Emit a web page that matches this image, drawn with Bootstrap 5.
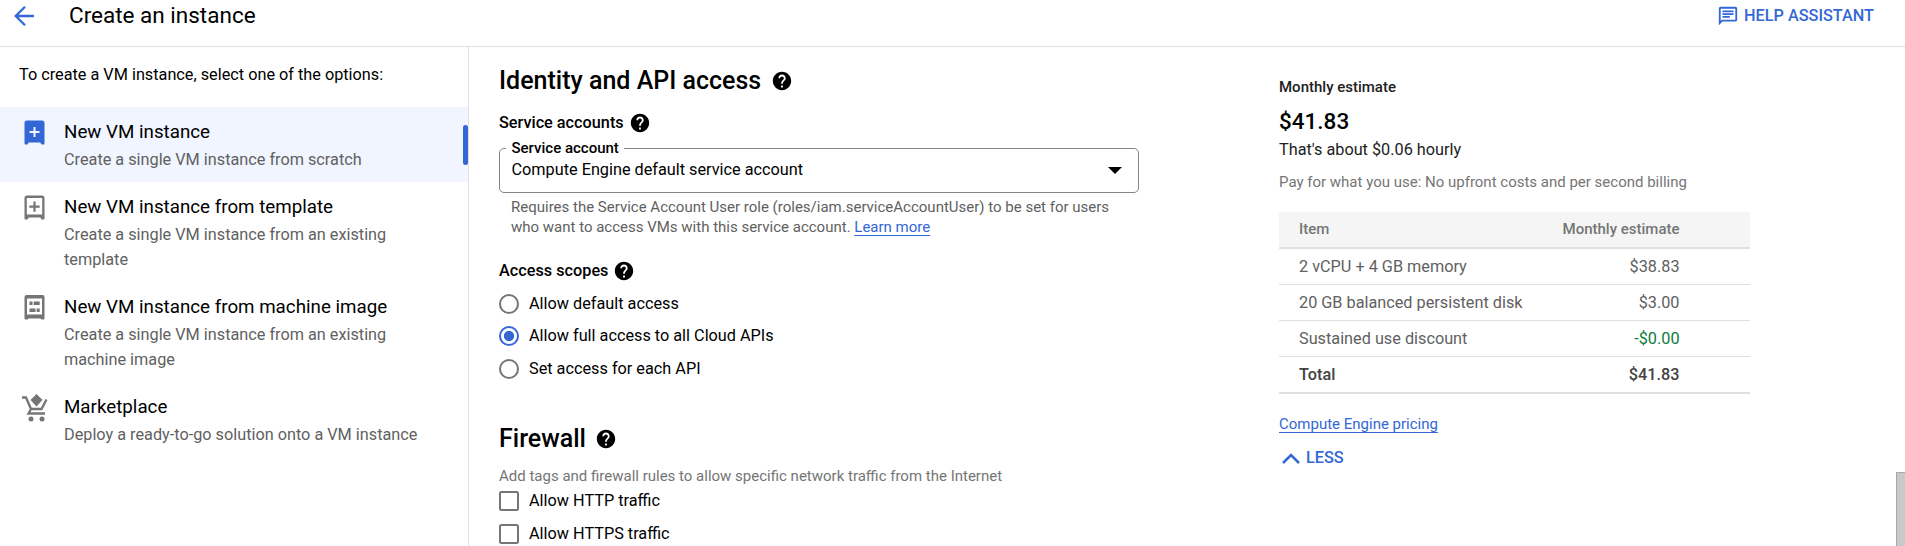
<!DOCTYPE html>
<html lang="en">
<head>
<meta charset="utf-8">
<meta name="viewport" content="width=device-width, initial-scale=1">
<title>Create an instance</title>
<link href="https://cdn.jsdelivr.net/npm/bootstrap@5.3.0/dist/css/bootstrap.min.css" rel="stylesheet">
<style>
:root{--blue:#3367d6;--line:#e0e0e0}
body{font-family:Roboto,"Liberation Sans",sans-serif;font-size:16.25px;line-height:20px;color:#000;background:#fff;height:100vh;overflow:hidden}
svg{display:block;flex:none}
.blue{color:var(--blue)}
.medium{font-weight:500}
.fs15{font-size:15px}
.muted{color:#616161}
a.doc{color:var(--blue);text-decoration:underline;text-underline-offset:3px;text-decoration-thickness:1px;text-decoration-skip-ink:none}
.topbar{height:47px;border-bottom:1px solid var(--line);padding:0 31px 0 14px}
.topbar h1{font-size:22.5px;font-weight:400;line-height:30px;margin:0 0 0 35px}
.topbar .back{margin-top:6px}
.topbar .help{gap:5px;margin-top:5px}
.side{width:469px;border-right:1px solid var(--line);flex:none}
.side .intro{padding:18px 0 0 19px;height:60px}
.option{padding:12.5px 48px 10px 21.5px;gap:17.5px;line-height:25px;color:#616161}
.option svg{fill:#757575}
.option h2{font-size:18.75px;font-weight:400;line-height:25px;color:#000;margin:0 0 2.5px}
.option.current{background:#f0f5ff}
.option.current svg{fill:var(--blue)}
.option.current::after{content:"";position:absolute;right:0;top:18px;width:5px;height:40px;background:var(--blue);border-radius:2.5px}
.option .cart{margin:-1px -2px 0 0}
.content{width:640px;margin-left:30px;flex:none;padding-top:18.5px}
.section{font-size:25px;font-weight:500;line-height:30px;margin:0;gap:9.5px}
.sub{font-size:16.25px;font-weight:500;line-height:20px;gap:5px;margin:17px 0 0}
.sub svg{margin:-1px 0}
.field{height:45px;border:1px solid #80868b;border-radius:5px;margin-top:15px;padding:0 16.5px 0 11.5px}
.field label{position:absolute;left:6px;top:-11px;padding:0 5px 0 5.5px;background:#fff;font-size:15px;font-weight:500;line-height:20px}
.hint{padding:0 12px;margin:4px 0 24px}
.choice{height:32.5px;gap:10px}
.choice .form-check-input{width:20px;height:20px;margin:0;border:2px solid #757575;background-color:#fff}
.choice .form-check-input[type=checkbox]{border-radius:2.5px}
.choice .form-check-input:checked{border-color:var(--blue);background-image:radial-gradient(circle,var(--blue) 4.8px,transparent 5.4px)}
.firewall{margin-top:38.5px}
.firewall-note{margin:13.5px 0 0;line-height:18px;color:#757575}
.estimate{width:470px;margin-left:140px;padding-top:30px;flex:none;color:#212121}
.price{font-size:22.5px;font-weight:500;line-height:30px;margin:9px 0 4px;color:#000}
.terms{margin:12px 0 20px;color:#757575}
.costs{border-collapse:separate;border-spacing:0;width:470px;white-space:nowrap}
.costs th,.costs td{padding:0 20px;border-bottom:1px solid var(--line);height:36px;color:#616161;font-weight:400;vertical-align:middle}
.costs th:last-child,.costs td:last-child{padding-right:70px;text-align:right}
.costs thead th{background:#f5f5f5;height:37px;border-bottom-width:2px;font-size:15px;font-weight:500;color:#757575;padding-bottom:1px}
.costs .total td{font-weight:500;color:#424242;height:37px;border-bottom-width:2px}
.costs td.credit{color:#0d7d3c}
.less{margin-top:14px;gap:6px;padding-left:3px}
.thumb{right:0;bottom:0;width:9px;height:74px;background:#c9c9c9;border:1px solid #a8a8a8;border-width:1px 0 0 1px}
</style>
</head>
<body class="d-flex flex-column">
<svg width="0" height="0" class="position-absolute"><defs>
<symbol id="help" viewBox="0 0 24 24"><path fill="#000" d="M12 2C6.480 2 2 6.480 2 12s4.480 10 10 10 10-4.480 10-10S17.520 2 12 2zm1 17h-2v-2h2v2zm2.070-7.750l-.9.920C13.450 12.900 13 13.500 13 15h-2v-.5c0-1.100.45-2.100 1.170-2.830l1.240-1.260c.37-.36.59-.86.59-1.410 0-1.100-.9-2-2-2s-2 .9-2 2H8c0-2.210 1.790-4 4-4s4 1.790 4 4c0 .88-.36 1.680-.93 2.250z"/></symbol>
</defs></svg>

<header class="topbar d-flex align-items-start flex-shrink-0">
  <svg class="back" width="20" height="20" viewBox="0 0 20 20" fill="none" stroke="#3367d6" stroke-width="2.300"><path d="M20 10H2M11 .8L1.700 10l9.300 9.200"/></svg>
  <h1>Create an instance</h1>
  <div class="help ms-auto d-flex align-items-center blue medium">
    <svg width="22" height="22" viewBox="0 0 24 24" fill="#3367d6"><path d="M4 4h16v12H5.170L4 17.170V4m0-2c-1.100 0-1.990.9-1.990 2L2 22l4-4h14c1.100 0 2-.9 2-2V4c0-1.100-.9-2-2-2H4zm2 10h8v2H6v-2zm0-3h12v2H6V9zm0-3h12v2H6V6z"/></svg>
    <span>HELP ASSISTANT</span>
  </div>
</header>

<div class="d-flex flex-grow-1">
  <nav class="side">
    <div class="intro">To create a VM instance, select one of the options:</div>
    <div class="option current d-flex position-relative">
      <svg width="25" height="25" viewBox="0 0 25 25"><path fill-rule="evenodd" d="M5 .5h15a2.500 2.500 0 0 1 2.500 2.500v20.500a1 1 0 0 1-1 1H19.500l-1.200-2H6.700l-1.200 2H3.500a1 1 0 0 1-1-1V3A2.500 2.500 0 0 1 5 .5zM11.500 7v4h-4v2h4v4h2v-4h4v-2h-4V7z"/></svg>
      <div><h2>New VM instance</h2>Create a single VM instance from scratch</div>
    </div>
    <div class="option d-flex">
      <svg width="25" height="25" viewBox="0 0 25 25"><path fill-rule="evenodd" d="M5 .5h15a2.500 2.500 0 0 1 2.500 2.500v20.500a1 1 0 0 1-1 1H19.500l-1.200-2H6.700l-1.200 2H3.500a1 1 0 0 1-1-1V3A2.500 2.500 0 0 1 5 .5zM4.800 3v16.500h15.400V3zM11.400 6.500v4H7.300v2.200h4.100v4h2.200v-4h4.100v-2.200h-4.100v-4z"/></svg>
      <div><h2>New VM instance from template</h2>Create a single VM instance from an existing template</div>
    </div>
    <div class="option d-flex">
      <svg width="25" height="25" viewBox="0 0 25 25"><path fill-rule="evenodd" d="M4.500 0h16a2 2 0 0 1 2 2v21.500a1 1 0 0 1-1 1H19.500l-1.200-1H6.700l-1.200 1H3.500a1 1 0 0 1-1-1V2a2 2 0 0 1 2-2zM5 3.500v16h15v-16z"/><path d="M7.500 6.500h3v3.500h-3zM11.700 6.500h6v3.500h-6zM7.500 13.500h6v3.500h-6zM14.700 13.500h3v3.500h-3z"/></svg>
      <div><h2>New VM instance from machine image</h2>Create a single VM instance from an existing machine image</div>
    </div>
    <div class="option d-flex">
      <svg class="cart" width="27" height="28" viewBox="0 0 27 28"><path d="M14.500 0l6 6-6 6.500-6-6.500z"/><path fill="none" stroke="#757575" stroke-width="2.300" d="M0 3.500h4L9 15h10.500L24.500 5.500M9 15l-2.500 4.500H23"/><circle cx="9" cy="25" r="2.500"/><circle cx="20" cy="25" r="2.500"/></svg>
      <div><h2>Marketplace</h2><span class="text-nowrap">Deploy a ready-to-go solution onto a VM instance</span></div>
    </div>
  </nav>

  <main class="content">
    <h2 class="section d-flex align-items-center">Identity and API access <svg width="22" height="22"><use href="#help"/></svg></h2>
    <h3 class="sub d-flex align-items-center">Service accounts <svg width="22" height="22"><use href="#help"/></svg></h3>
    <div class="field position-relative d-flex align-items-center justify-content-between">
      <label>Service account</label>
      <span>Compute Engine default service account</span>
      <svg width="14" height="7" viewBox="0 0 14 7"><path d="M0 0h14L7 7z"/></svg>
    </div>
    <p class="hint fs15 muted">Requires the Service Account User role (roles/iam.serviceAccountUser) to be set for users who want to access VMs with this service account. <a class="doc" href="#">Learn more</a></p>
    <h3 class="sub d-flex align-items-center mt-0">Access scopes <svg width="22" height="22"><use href="#help"/></svg></h3>
    <div style="padding-top:7px">
      <label class="choice d-flex align-items-center"><input class="form-check-input" type="radio" name="scope">Allow default access</label>
      <label class="choice d-flex align-items-center"><input class="form-check-input" type="radio" name="scope" checked>Allow full access to all Cloud APIs</label>
      <label class="choice d-flex align-items-center"><input class="form-check-input" type="radio" name="scope">Set access for each API</label>
    </div>
    <h2 class="section firewall d-flex align-items-center">Firewall <svg width="22" height="22"><use href="#help"/></svg></h2>
    <p class="firewall-note fs15">Add tags and firewall rules to allow specific network traffic from the Internet</p>
    <label class="choice d-flex align-items-center"><input class="form-check-input" type="checkbox">Allow HTTP traffic</label>
    <label class="choice d-flex align-items-center"><input class="form-check-input" type="checkbox">Allow HTTPS traffic</label>
  </main>

  <aside class="estimate">
    <div class="fs15 medium">Monthly estimate</div>
    <div class="price">$41.83</div>
    <div>That's about $0.06 hourly</div>
    <div class="terms fs15">Pay for what you use: No upfront costs and per second billing</div>
    <table class="costs">
      <thead><tr><th>Item</th><th>Monthly estimate</th></tr></thead>
      <tbody>
        <tr><td>2 vCPU + 4 GB memory</td><td>$38.83</td></tr>
        <tr><td>20 GB balanced persistent disk</td><td>$3.00</td></tr>
        <tr><td>Sustained use discount</td><td class="credit">-$0.00</td></tr>
        <tr class="total"><td>Total</td><td>$41.83</td></tr>
      </tbody>
    </table>
    <a class="doc fs15 d-block" href="#" style="margin-top:20px">Compute Engine pricing</a>
    <div class="less d-flex align-items-center blue medium">
      <svg width="18" height="11" viewBox="0 0 18 11" fill="none" stroke="#3367d6" stroke-width="2.500"><path d="M1 10l8-8 8 8"/></svg>LESS
    </div>
  </aside>
</div>
<div class="thumb position-absolute"></div>
<script src="https://cdn.jsdelivr.net/npm/bootstrap@5.3.0/dist/js/bootstrap.bundle.min.js"></script>
</body>
</html>
